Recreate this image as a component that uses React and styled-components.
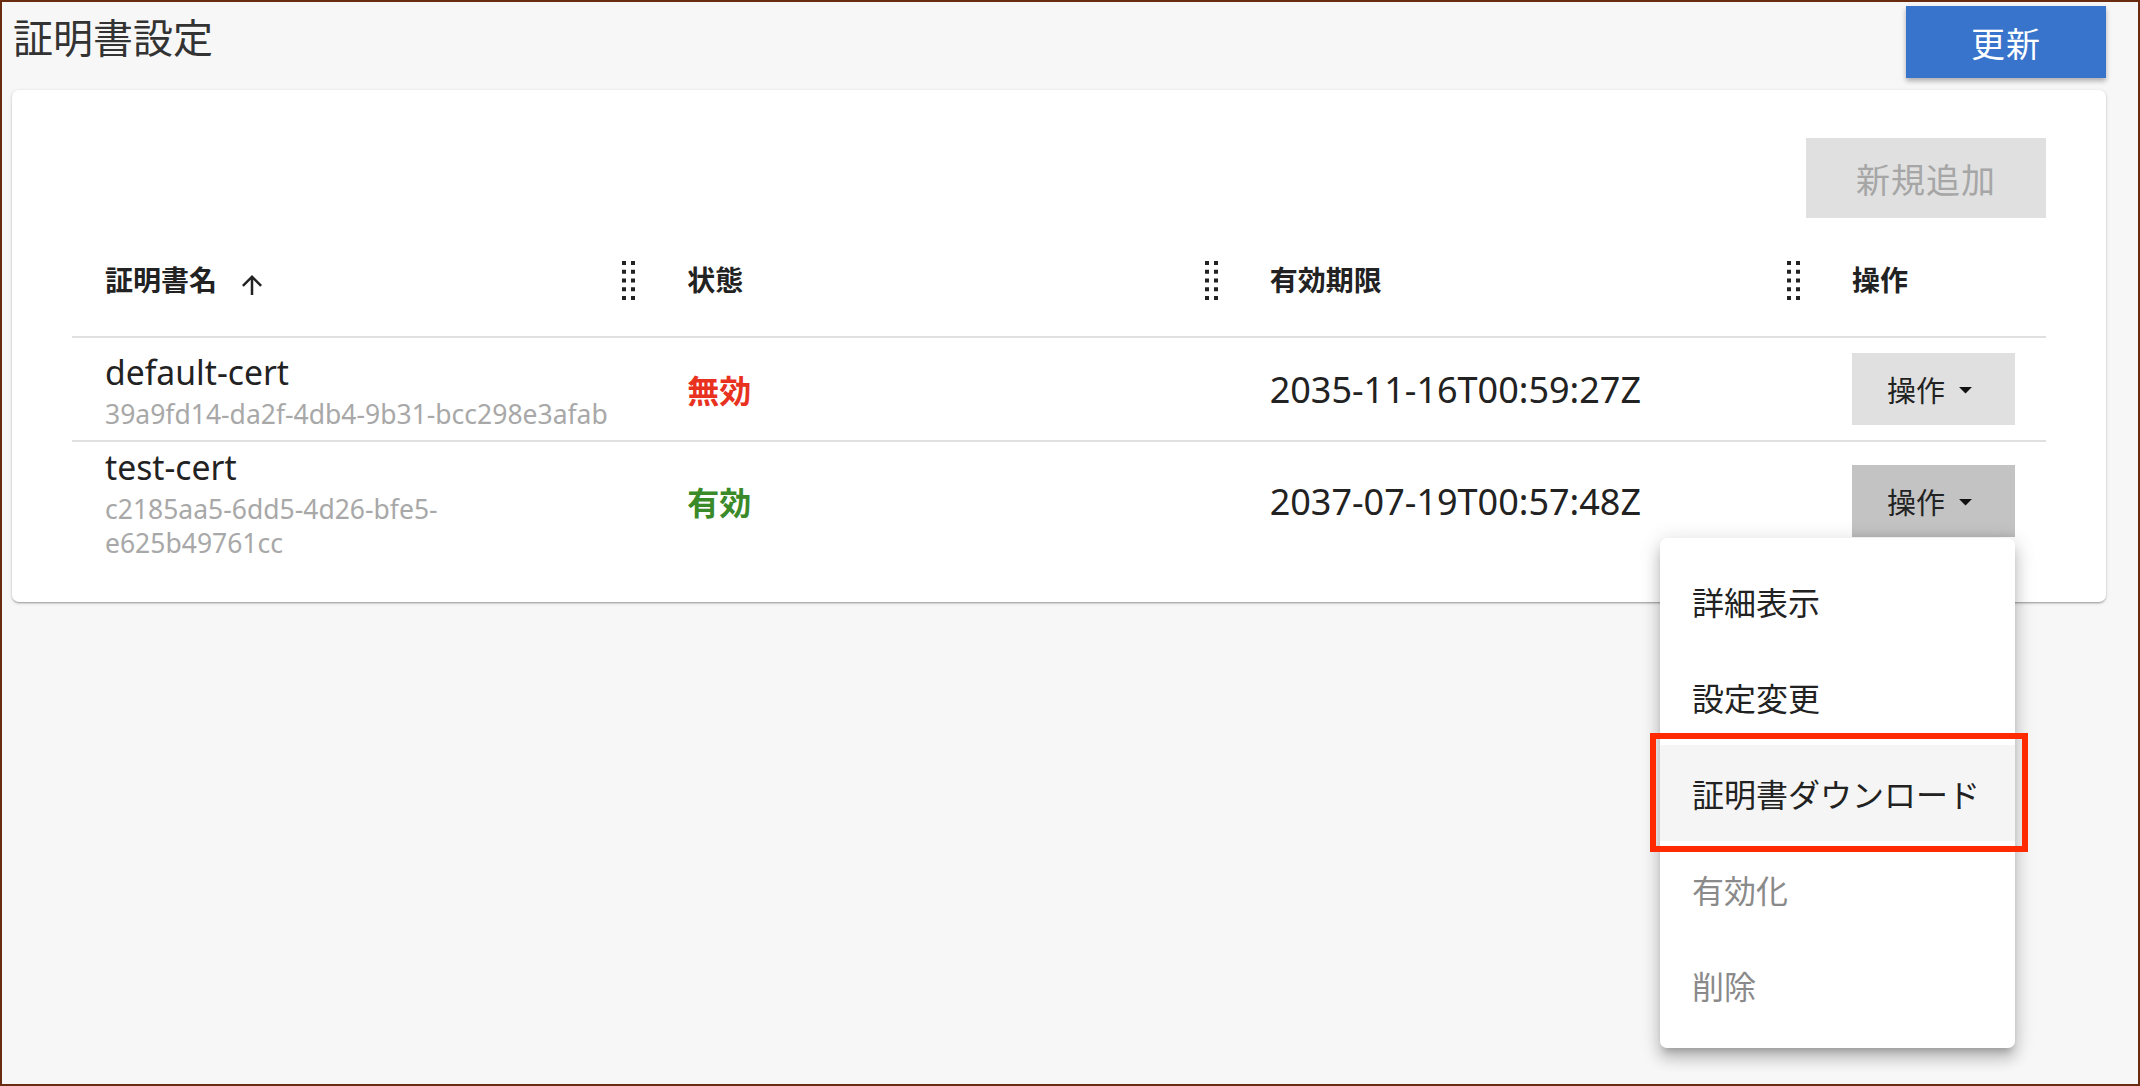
import React from 'react'
import styled, { createGlobalStyle } from 'styled-components'

const GlobalStyle = createGlobalStyle`
	* { box-sizing: border-box; }
	html, body { margin: 0; padding: 0; }
	body {
		background: #f7f7f7;
		font-family: "Noto Sans", "Noto Sans CJK JP", sans-serif;
		color: #222;
	}
`

const Page = styled.div`
	min-height: 100vh;
	border: 2px solid #6a2c10;
	padding: 4px 32px 0 10px;
`

const TopBar = styled.header`
	display: flex;
	justify-content: space-between;
	align-items: flex-start;
	height: 72px;
`

const Title = styled.h1`
	margin: 12px 0 0 1px;
	font-size: 40px;
	line-height: 40px;
	font-weight: 400;
	color: #333;
`

const PrimaryButton = styled.button`
	width: 200px;
	height: 72px;
	border: none;
	background: #3874cb;
	color: #fff;
	font-family: inherit;
	font-size: 34px;
	letter-spacing: 1px;
	box-shadow: 0 3px 5px rgba(0, 0, 0, 0.3);
	cursor: pointer;
`

const Card = styled.section`
	margin-top: 12px;
	background: #fff;
	border-radius: 7px;
	box-shadow: 0 2px 2px -1px rgba(0, 0, 0, 0.2), 0 1px 2px 0 rgba(0, 0, 0, 0.14), 0 1px 4px 0 rgba(0, 0, 0, 0.12);
	padding: 48px 60px 42px;
`

const Toolbar = styled.div`
	display: flex;
	justify-content: flex-end;
`

const GreyButton = styled.button`
	width: 240px;
	height: 80px;
	border: none;
	background: #e0e0e0;
	color: #a6a6a6;
	font-family: inherit;
	font-size: 34px;
	letter-spacing: 1px;
`

const Table = styled.div`
	margin-top: 42px;
`

const Row = styled.div`
	display: grid;
	grid-template-columns: 1fr 1fr 1fr 227px;
	border-bottom: ${p => (p.last ? 'none' : '2px solid #e0e0e0')};
`

const HeadCell = styled.div`
	display: flex;
	align-items: center;
	justify-content: space-between;
	height: 76px;
	padding: 0 19px 35px 33px;
`

const HeadLabel = styled.div`
	display: flex;
	align-items: center;
	font-size: 28px;
	line-height: 41px;
	font-weight: 700;
	color: #222;
`

const SortIcon = styled.svg`
	width: 30px;
	height: 30px;
	margin: 9px 0 0 20px;
	fill: #222;
`

const Cell = styled.div`
	display: flex;
	flex-direction: column;
	justify-content: center;
	align-items: flex-start;
	padding: ${p => (p.action ? '15px 33px' : '0 33px')};
	position: relative;
`

const Name = styled.div`
	font-size: 33.7px;
	line-height: 50px;
	color: #222;
`

const Uid = styled.div`
	max-width: 508px;
	font-size: 26.5px;
	line-height: 34px;
	color: #a8a8a8;
`

const Status = styled.div`
	font-size: 32px;
	font-weight: 700;
	color: ${p => (p.active ? '#3a8a2a' : '#e8321f')};
`

const DateText = styled.div`
	font-size: 36px;
	color: #222;
`

const MenuAnchor = styled.div`
	position: relative;
`

const ActionButton = styled.button`
	display: flex;
	align-items: center;
	height: 72px;
	width: 163px;
	padding: 0 0 0 35px;
	border: none;
	background: ${p => (p.open ? '#c3c3c3' : '#e0e0e0')};
	box-shadow: ${p => (p.open ? 'inset 0 -6px 6px -4px rgba(0,0,0,0.08)' : 'none')};
	color: #222;
	font-family: inherit;
	font-size: 29px;
	cursor: pointer;
`

const Caret = styled.svg`
	width: 31px;
	height: 31px;
	margin-left: 5px;
	fill: #111;
`

const Menu = styled.ul`
	position: absolute;
	top: calc(100% + 1px);
	right: 0;
	width: 355px;
	margin: 0;
	padding: 15px 0;
	list-style: none;
	background: #fff;
	border-radius: 7px;
	box-shadow: 0 7px 7px -4px rgba(0, 0, 0, 0.2), 0 11px 14px 1px rgba(0, 0, 0, 0.14), 0 4px 20px 3px rgba(0, 0, 0, 0.12);
	z-index: 5;
`

const MenuItem = styled.li`
	position: relative;
	display: flex;
	align-items: center;
	height: 96px;
	padding: 0 32px;
	font-size: 32px;
	white-space: nowrap;
	color: ${p => (p.disabled ? '#8a8a8a' : '#222')};
	background: ${p => (p.highlight ? '#f5f5f5' : 'transparent')};

	${p => p.highlight && `
		&::after {
			content: '';
			position: absolute;
			top: -12px;
			bottom: -11px;
			left: -10px;
			right: -13px;
			border: 6px solid #ff2a00;
			pointer-events: none;
		}
	`}
`

const Separator = () => (
	<svg width="13" height="39" viewBox="0 0 13 39">
		{[0, 8.75, 17.5, 26.25, 35].map(y => (
			<g key={y} fill="#222">
				<rect x="0" y={y} width="4" height="4" />
				<rect x="9" y={y} width="4" height="4" />
			</g>
		))}
	</svg>
)

const certs = [
	{ name: 'default-cert', id: '39a9fd14-da2f-4db4-9b31-bcc298e3afab', active: false, expires: '2035-11-16T00:59:27Z' },
	{ name: 'test-cert', id: 'c2185aa5-6dd5-4d26-bfe5-e625b49761cc', active: true, expires: '2037-07-19T00:57:48Z' },
]

const menuItems = [
	{ label: '詳細表示' },
	{ label: '設定変更' },
	{ label: '証明書ダウンロード', highlight: true },
	{ label: '有効化', disabled: true },
	{ label: '削除', disabled: true },
]

export default function App() {
	return (
		<Page>
			<GlobalStyle />
			<TopBar>
				<Title>証明書設定</Title>
				<PrimaryButton>更新</PrimaryButton>
			</TopBar>
			<Card>
				<Toolbar>
					<GreyButton disabled>新規追加</GreyButton>
				</Toolbar>
				<Table>
					<Row>
						<HeadCell>
							<HeadLabel>
								証明書名
								<SortIcon viewBox="0 0 24 24">
									<path d="M4 12l1.41 1.41L11 7.830V20h2V7.83l5.58 5.59L20 12l-8-8-8 8z" />
								</SortIcon>
							</HeadLabel>
							<Separator />
						</HeadCell>
						<HeadCell>
							<HeadLabel>状態</HeadLabel>
							<Separator />
						</HeadCell>
						<HeadCell>
							<HeadLabel>有効期限</HeadLabel>
							<Separator />
						</HeadCell>
						<HeadCell>
							<HeadLabel>操作</HeadLabel>
						</HeadCell>
					</Row>
					{certs.map((c, i) => {
						const open = i === certs.length - 1
						return (
							<Row key={c.id} last={open}>
								<Cell>
									<Name>{c.name}</Name>
									<Uid>{c.id}</Uid>
								</Cell>
								<Cell>
									<Status active={c.active}>{c.active ? '有効' : '無効'}</Status>
								</Cell>
								<Cell>
									<DateText>{c.expires}</DateText>
								</Cell>
								<Cell action>
									<MenuAnchor>
										<ActionButton open={open}>
											操作
											<Caret viewBox="0 0 24 24">
												<path d="M7 10l5 5 5-5z" />
											</Caret>
										</ActionButton>
										{open && (
											<Menu>
												{menuItems.map(m => (
													<MenuItem key={m.label} disabled={m.disabled} highlight={m.highlight}>
														{m.label}
													</MenuItem>
												))}
											</Menu>
										)}
									</MenuAnchor>
								</Cell>
							</Row>
						)
					})}
				</Table>
			</Card>
		</Page>
	)
}
